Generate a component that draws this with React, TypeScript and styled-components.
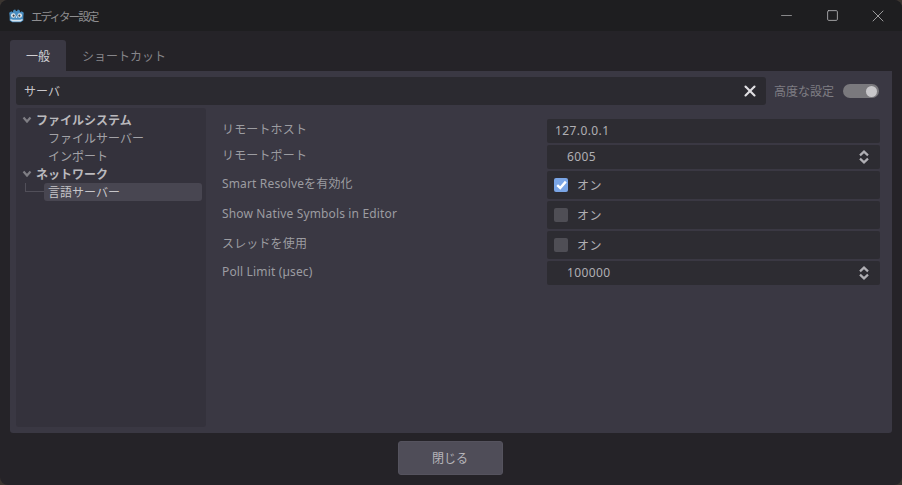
import React from "react";
import styled, { createGlobalStyle } from "styled-components";
import { Minus, Square, X } from "lucide-react";

const GlobalStyle = createGlobalStyle`
  html, body {
    margin: 0;
    padding: 0;
    background: #3a3530;
  }
  body {
    font-family: "Noto Sans", "Noto Sans CJK JP", sans-serif;
    font-size: 12px;
    color: #c4c3c7;
  }
`;

const Window = styled.div`
  width: 902px;
  height: 485px;
  box-sizing: border-box;
  display: flex;
  flex-direction: column;
  background: #252328;
  border-radius: 8px;
  overflow: hidden;
`;

const TitleBar = styled.div`
  height: 31px;
  flex-shrink: 0;
  display: flex;
  align-items: center;
  padding: 0 1px 0 9px;
  background: #1e1e20;
`;

const TitleText = styled.div`
  margin-left: 7px;
  font-size: 11.5px;
  letter-spacing: -1.9px;
  color: #8e8e90;
  flex-grow: 1;
`;

const WinButton = styled.div`
  width: 46px;
  height: 31px;
  display: flex;
  align-items: center;
  justify-content: center;
  color: #b4b4b6;
`;

const Tabs = styled.div`
  display: flex;
  height: 31px;
  margin: 9px 10px 0;
  flex-shrink: 0;
`;

const Tab = styled.div<{ $active?: boolean }>`
  height: 31px;
  padding: 0 16px;
  display: flex;
  align-items: center;
  font-size: 12px;
  border-radius: 3px 3px 0 0;
  background: ${({ $active }) => ($active ? "#3a3843" : "transparent")};
  color: ${({ $active }) => ($active ? "#d0cfd3" : "#86858a")};
`;

const Panel = styled.div`
  margin: 0 10px;
  height: 362px;
  box-sizing: border-box;
  padding: 6px;
  display: flex;
  flex-direction: column;
  gap: 3px;
  background: #3a3843;
  border-radius: 0 0 3px 3px;
`;

const SearchRow = styled.div`
  display: flex;
  align-items: center;
  height: 28px;
  flex-shrink: 0;
`;

const SearchBox = styled.div`
  width: 750px;
  height: 28px;
  box-sizing: border-box;
  padding: 0 7px 0 8px;
  display: flex;
  align-items: center;
  justify-content: space-between;
  background: #2b2a30;
  border-radius: 3px;
  color: #c8c7cb;
  font-size: 12px;
`;

const AdvancedLabel = styled.div`
  margin-left: 8px;
  font-size: 12px;
  color: #7f7e84;
`;

const Toggle = styled.div`
  width: 36px;
  height: 14px;
  margin-left: 9px;
  padding-right: 2px;
  box-sizing: border-box;
  display: flex;
  align-items: center;
  justify-content: flex-end;
  background: #7a797d;
  border-radius: 7px;
`;

const Knob = styled.div`
  width: 11px;
  height: 11px;
  border-radius: 50%;
  background: #c8c7ca;
`;

const Content = styled.div`
  flex-grow: 1;
  display: flex;
`;

const Tree = styled.div`
  width: 190px;
  box-sizing: border-box;
  padding-top: 3px;
  background: #34323c;
  border-radius: 3px;
  flex-shrink: 0;
`;

const TreeRow = styled.div<{ $selected?: boolean }>`
  height: 18px;
  display: flex;
  align-items: center;
  position: relative;
  box-sizing: border-box;
  margin-left: ${({ $selected }) => ($selected ? "28px" : "0")};
  margin-right: ${({ $selected }) => ($selected ? "4px" : "0")};
  padding-left: ${({ $selected }) => ($selected ? "4px" : "32px")};
  padding-bottom: 1px;
  border-radius: 3px;
  color: ${({ $selected }) => ($selected ? "#c6c5c9" : "#a3a2a7")};
  background: ${({ $selected }) => ($selected ? "#484651" : "transparent")};
`;

const GroupRow = styled.div`
  height: 18px;
  display: flex;
  align-items: center;
  padding: 0 0 1px 6px;
  box-sizing: border-box;
  font-weight: 700;
  color: #bab9bd;
`;

const Chevron = styled.svg`
  width: 10px;
  height: 8px;
  margin-right: 4px;
  fill: none;
  stroke: #7f7e84;
  stroke-width: 2.2;
`;

const TreeLine = styled.div`
  position: absolute;
  left: -19px;
  top: 0;
  width: 19px;
  height: 9px;
  box-sizing: border-box;
  border-left: 1px solid #514f59;
  border-bottom: 1px solid #514f59;
`;

const Inspector = styled.div`
  flex-grow: 1;
  padding: 11px 6px 0 16px;
  display: flex;
  flex-direction: column;
  gap: 2px;
`;

const PropRow = styled.div<{ $tall?: boolean }>`
  height: ${({ $tall }) => ($tall ? "28px" : "24px")};
  display: grid;
  grid-template-columns: 325px 333px;
  align-items: center;
`;

const PropLabel = styled.div`
  font-size: 12px;
  letter-spacing: 0.15px;
  padding-bottom: 4px;
  color: #9c9ca1;
`;

const Field = styled.div`
  height: 100%;
  box-sizing: border-box;
  display: flex;
  align-items: center;
  background: #2d2c32;
  border-radius: 2px;
  font-size: 12px;
  letter-spacing: 0.4px;
  color: #b0afb4;
`;

const FieldValue = styled.span`
  padding-bottom: 2px;
`;

const TextField = styled(Field)`
  padding-left: 8px;
`;

const NumberField = styled(Field)`
  padding: 0 11px 0 20px;
  justify-content: space-between;
`;

const CheckField = styled(Field)`
  padding-left: 7px;
  gap: 9px;
`;

const CheckLabel = styled.span`
  padding-bottom: 1px;
`;

const CheckBox = styled.div<{ $checked?: boolean }>`
  width: 14px;
  height: 14px;
  display: flex;
  align-items: center;
  justify-content: center;
  border-radius: 2px;
  background: ${({ $checked }) => ($checked ? "#7aa5e6" : "#4f4e55")};
`;

const Footer = styled.div`
  flex-grow: 1;
  display: flex;
  justify-content: center;
  padding: 8px 2px 0 0;
`;

const CloseButton = styled.div`
  width: 105px;
  height: 34px;
  display: flex;
  align-items: center;
  justify-content: center;
  box-sizing: border-box;
  border: 1px solid #55535e;
  background: #4f4d58;
  border-radius: 3px;
  color: #b6b5ba;
  font-size: 12px;
`;

const GodotLogo = () => (
  <svg width="15" height="14" viewBox="1 2 14 13">
    <path
      d="M1.6 9 L1.2 5.4 L3.2 4 L4.6 5 L5.2 2.8 L6.8 2.4 L7.5 3.8 H8.5 L9.2 2.4 L10.8 2.8 L11.4 5 L12.8 4 L14.8 5.4 L14.4 9 V12.6 L12 14.4 H4 L1.6 12.6 Z"
      fill="#478cbf"
    />
    <circle cx="5" cy="8" r="2.1" fill="#e8eef3" />
    <circle cx="11" cy="8" r="2.1" fill="#e8eef3" />
    <circle cx="5.3" cy="8.2" r="1" fill="#39414a" />
    <circle cx="10.7" cy="8.2" r="1" fill="#39414a" />
    <rect x="7.4" y="8.8" width="1.2" height="1.4" fill="#e8eef3" />
    <path d="M2.4 11.4 L4.6 12 H11.4 L13.6 11.4 V12.4 L11.6 13.6 H4.4 L2.4 12.4 Z" fill="#d8e4ee" />
  </svg>
);

const Arrow = () => (
  <Chevron viewBox="0 0 10 8">
    <path d="M1.5 1.5 L5 5.5 L8.5 1.5" />
  </Chevron>
);

const Spinner = () => (
  <svg width="10" height="14" viewBox="0 0 10 14" fill="none" stroke="#b0afb4" strokeWidth="2.2">
    <path d="M1 5.4 L5 1.6 L9 5.4" />
    <path d="M1 8.6 L5 12.4 L9 8.6" />
  </svg>
);

const Check = () => (
  <svg width="11" height="10" viewBox="0 0 11 10" fill="none" stroke="#fff" strokeWidth="2.4">
    <path d="M1.2 5.2 L4.2 8 L9.8 1.6" />
  </svg>
);

const App: React.FC = () => {
  return (
    <Window>
      <GlobalStyle />
      <TitleBar>
        <GodotLogo />
        <TitleText>エディター設定</TitleText>
        <WinButton><Minus size={17} strokeWidth={1} /></WinButton>
        <WinButton><Square size={13} strokeWidth={1.6} /></WinButton>
        <WinButton><X size={20} strokeWidth={1} /></WinButton>
      </TitleBar>
      <Tabs>
        <Tab $active>一般</Tab>
        <Tab>ショートカット</Tab>
      </Tabs>
      <Panel>
        <SearchRow>
          <SearchBox>
            サーバ
            <X size={18} strokeWidth={2.8} color="#e0dfe2" />
          </SearchBox>
          <AdvancedLabel>高度な設定</AdvancedLabel>
          <Toggle><Knob /></Toggle>
        </SearchRow>
        <Content>
          <Tree>
            <GroupRow><Arrow />ファイルシステム</GroupRow>
            <TreeRow>ファイルサーバー</TreeRow>
            <TreeRow>インポート</TreeRow>
            <GroupRow><Arrow />ネットワーク</GroupRow>
            <TreeRow $selected><TreeLine />言語サーバー</TreeRow>
          </Tree>
          <Inspector>
            <PropRow>
              <PropLabel>リモートホスト</PropLabel>
              <TextField><FieldValue>127.0.0.1</FieldValue></TextField>
            </PropRow>
            <PropRow>
              <PropLabel>リモートポート</PropLabel>
              <NumberField><FieldValue>6005</FieldValue><Spinner /></NumberField>
            </PropRow>
            <PropRow $tall>
              <PropLabel>Smart Resolveを有効化</PropLabel>
              <CheckField><CheckBox $checked><Check /></CheckBox><CheckLabel>オン</CheckLabel></CheckField>
            </PropRow>
            <PropRow $tall>
              <PropLabel>Show Native Symbols in Editor</PropLabel>
              <CheckField><CheckBox /><CheckLabel>オン</CheckLabel></CheckField>
            </PropRow>
            <PropRow $tall>
              <PropLabel>スレッドを使用</PropLabel>
              <CheckField><CheckBox /><CheckLabel>オン</CheckLabel></CheckField>
            </PropRow>
            <PropRow>
              <PropLabel>Poll Limit (µsec)</PropLabel>
              <NumberField><FieldValue>100000</FieldValue><Spinner /></NumberField>
            </PropRow>
          </Inspector>
        </Content>
      </Panel>
      <Footer>
        <CloseButton>閉じる</CloseButton>
      </Footer>
    </Window>
  );
};

export default App;
